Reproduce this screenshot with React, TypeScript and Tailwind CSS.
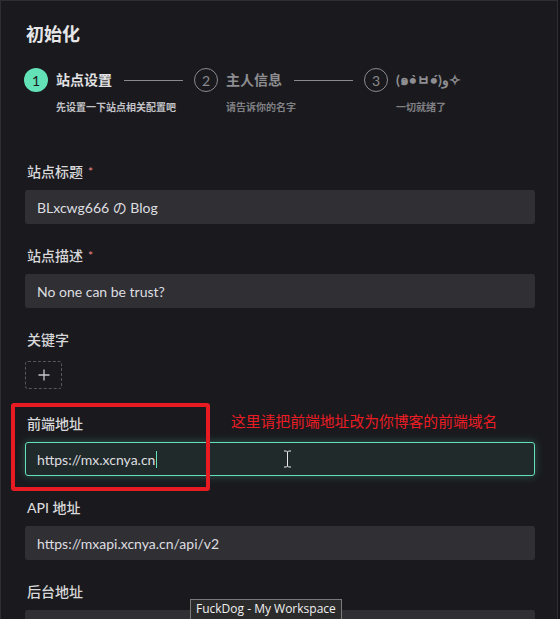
import React from "react";

const FONT = { fontFamily: '"Lato", "Noto Sans CJK SC", "Noto Sans", sans-serif' };

function Step({
  n,
  title,
  desc,
  active,
  last,
}: {
  n: string;
  title: string;
  desc: string;
  active?: boolean;
  last?: boolean;
}) {
  return (
    <div className={last ? "flex items-start flex-1" : "flex items-start w-[170px] shrink-0"}>
      <div
        className={
          active
            ? "w-[24px] h-[24px] rounded-full bg-[#63e2b7] text-[#1b1b1f] flex items-center justify-center text-[14px] shrink-0"
            : "w-[24px] h-[24px] rounded-full border border-[#8a8a8e] text-[#8a8a8e] flex items-center justify-center text-[14px] shrink-0"
        }
      >
        {n}
      </div>
      <div className="ml-[8px] flex-1 flex flex-col">
        <div className="flex items-center h-[24px]">
          <span
            className={
              active
                ? "text-[14px] leading-[24px] font-bold text-[#e2e2e4] whitespace-nowrap"
                : "text-[14px] leading-[24px] font-bold text-[#8e8e92] whitespace-nowrap"
            }
          >
            {title}
          </span>
          {!last && <div className="flex-1 h-px bg-[#8a8a8e] ml-[12px] mr-[11px]" />}
        </div>
        <div
          className={
            active
              ? "mt-[8px] text-[10px] leading-[15px] font-bold text-[#c4c4c8] whitespace-nowrap"
              : "mt-[8px] text-[10px] leading-[15px] font-bold text-[#808084] whitespace-nowrap"
          }
        >
          {desc}
        </div>
      </div>
    </div>
  );
}

function Label({ text, required }: { text: string; required?: boolean }) {
  return (
    <div className="h-[22px] leading-[22px] mb-[7px] pl-[2px] text-[14px] font-medium text-[#d8d8da] flex items-center">
      <span>{text}</span>
      {required && <span className="ml-[5px] text-[#e88080] text-[12px]">*</span>}
    </div>
  );
}

function Input({ value }: { value: string }) {
  return (
    <div className="h-[34px] w-[510px] rounded-[3px] bg-[#303034] px-[12px] flex items-center text-[14px] text-[#dedee0]">
      {value}
    </div>
  );
}

export default function App() {
  return (
    <div className="w-[560px] h-[619px] overflow-hidden bg-[#141417] relative" style={FONT}>
      <div className="w-[558px] h-full bg-[#1a1a1e] border-t border-l border-r border-[#2e2e33] pl-[23px] flex flex-col">
        <div className="mt-[21px] h-[24px] leading-[24px] text-[18px] font-bold text-[#e6e6e8] ml-[2px]">
          初始化
        </div>

        <div className="mt-[22px] flex items-start">
          <Step n="1" title="站点设置" desc="先设置一下站点相关配置吧" active />
          <Step n="2" title="主人信息" desc="请告诉你的名字" />
          <Step n="3" title="(๑•̀ㅂ•́)و✧" desc="一切就绪了" last />
        </div>

        <div className="mt-[46px] flex flex-col pl-[1px]">
          <div className="mb-[21px]">
            <Label text="站点标题" required />
            <Input value="BLxcwg666 の Blog" />
          </div>
          <div className="mb-[21px]">
            <Label text="站点描述" required />
            <Input value="No one can be trust?" />
          </div>
          <div className="mb-[21px]">
            <Label text="关键字" />
            <div className="h-[34px] flex items-center">
              <div className="w-[37px] h-[28px] rounded-[3px] border border-dashed border-[#56565b] flex items-center justify-center">
                <svg width="14" height="14" viewBox="0 0 14 14">
                  <path d="M7 1.5v11M1.5 7h11" stroke="#c8c8cc" strokeWidth="1.3" />
                </svg>
              </div>
            </div>
          </div>
          <div className="mb-[21px] relative">
            <Label text="前端地址" />
            <div className="h-[34px] w-[510px] rounded-[3px] bg-[#212a2a] border border-[#63e2b7] shadow-[0_0_8px_rgba(99,226,183,0.3)] px-[11px] flex items-center text-[14px] text-[#dedee0]">
              <span>https://mx.xcnya.cn</span>
              <span className="inline-block w-px h-[17px] bg-[#63e2b7] ml-[1px]" />
            </div>
            <svg
              className="absolute left-[258px] top-[37px]"
              width="9"
              height="18"
              viewBox="0 0 9 18"
            >
              <path d="M1 1h2.5l1 1 1-1H8M4.5 2v14M1 17h2.5l1-1 1 1H8" stroke="#e8e8e8" strokeWidth="1" fill="none" />
            </svg>
            <div className="absolute left-[-14px] top-[-10px] w-[199px] h-[88px] border-[4px] border-[#e81b23] rounded-[3px]" />
            <div className="absolute left-[206px] top-[-3px] text-[14.8px] leading-[22px] text-[#ea1c24] whitespace-nowrap">
              这里请把前端地址改为你博客的前端域名
            </div>
          </div>
          <div className="mb-[21px]">
            <Label text="API 地址" />
            <Input value="https://mxapi.xcnya.cn/api/v2" />
          </div>
          <div className="mb-[21px]">
            <Label text="后台地址" />
            <Input value="" />
          </div>
        </div>
      </div>
      <div
        className="absolute left-[190px] top-[599px] h-[22px] px-[5px] bg-[#2b2b2b] border border-[#7a7a7a] text-[12px] leading-[18px] text-[#f0f0f0] whitespace-nowrap"
        style={{ fontFamily: '"Open Sans", "Noto Sans", sans-serif' }}
      >
        FuckDog - My Workspace
      </div>
    </div>
  );
}
